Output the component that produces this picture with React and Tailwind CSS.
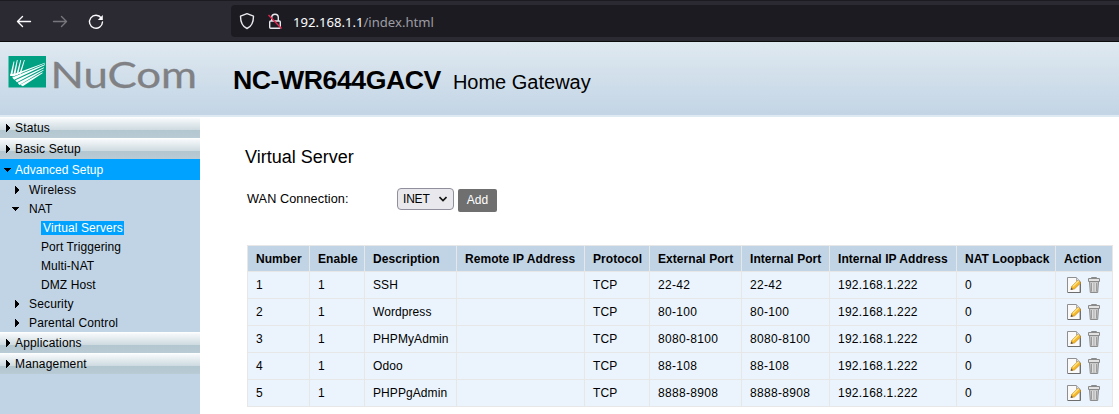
const cols = [
  ['Number', 'w-[61px]'],
  ['Enable', 'w-[54px]'],
  ['Description', 'w-[91px]'],
  ['Remote IP Address', 'w-[127px]'],
  ['Protocol', 'w-[64px]'],
  ['External Port', 'w-[91px]'],
  ['Internal Port', 'w-[87px]'],
  ['Internal IP Address', 'w-[126px]'],
  ['NAT Loopback', 'w-[98px]'],
  ['Action', 'w-[56px]'],
];

const rows = [
  ['SSH', '22-42'],
  ['Wordpress', '80-100'],
  ['PHPMyAdmin', '8080-8100'],
  ['Odoo', '88-108'],
  ['PHPPgAdmin', '8888-8908'],
];

function Arrow({ open }) {
  return (
    <svg width="8" height="8" viewBox="0 0 8 8" className="block shrink-0" shapeRendering="crispEdges">
      <path d={open ? 'M0 2h7.500L3.750 6z' : 'M2 0v8l4.200-4z'} fill="#000" />
    </svg>
  );
}

function Section({ label, open }) {
  return (
    <div
      className={
        open
          ? 'flex h-[21px] items-center gap-[3px] bg-[#00a2ff] pl-1 text-white'
          : 'flex h-[21px] items-center gap-[3px] bg-[linear-gradient(to_bottom,#ffffff_0,#f4f7f9_10%,#cddae0_62%,#b3c7d1_63%,#b9cbd5_100%)] pl-1 text-black'
      }
    >
      <Arrow open={open} />
      <span className={open ? '' : 'tracking-[0.17px]'}>{label}</span>
    </div>
  );
}

function Group({ label, open }) {
  return (
    <div className={open ? 'flex h-[19px] items-center gap-[9px] pl-3' : 'flex h-[19px] items-center gap-2 pl-[13px]'}>
      <Arrow open={open} />
      <span className="tracking-[0.15px]">{label}</span>
    </div>
  );
}

function Leaf({ label, active }) {
  return (
    <div className="flex h-[19px] items-center pl-[41px]">
      <span
        className={
          active
            ? 'h-[14px] bg-[#00a2ff] pl-[2px] pr-[1px] leading-[14px] tracking-[0.1px] text-white'
            : 'tracking-[0.09px]'
        }
      >
        {label}
      </span>
    </div>
  );
}

function EditIcon() {
  return (
    <svg width="16" height="16" viewBox="0 0 16 16">
      <path d="M1.500 .5h9l3.500 3.500v11.500h-12.500z" fill="#fafafa" stroke="#8f8f8f" />
      <path d="M10.500 .5V4H14" fill="#ddd" stroke="#aaa" />
      <path d="M14.500 5v10.500H2" fill="none" stroke="#6d6d6d" />
      <path d="M5 12.500l.8-3.200 6.200-6 2.700 2.600-6.200 6z" fill="#f5b92b" stroke="#c98a18" strokeWidth=".7" />
      <path d="M6.800 9.500l6-5.800" stroke="#ffe58a" strokeWidth="1.200" />
      <path d="M4.600 12.900l.7-2.400 1.800 1.700z" fill="#555" />
    </svg>
  );
}

function TrashIcon() {
  return (
    <svg width="14" height="16" viewBox="0 0 14 16">
      <path d="M2.500 4.500h9l-.8 11H3.300z" fill="#c9c9c9" stroke="#8c8c8c" />
      <path d="M4.700 6v8.500M7 6v8.500M9.300 6v8.500" stroke="#8a8a8a" strokeWidth=".9" />
      <path d="M5.800 6v8.500M8.100 6v8.500" stroke="#f0f0f0" strokeWidth=".9" />
      <path d="M1.500 1.500h11v3h-11z" fill="#e2e2e2" stroke="#8a8a8a" />
      <path d="M4.500 1.500V.5h5v1" fill="none" stroke="#8a8a8a" />
    </svg>
  );
}

export default function App() {
  return (
    <div className="flex h-[414px] w-[1119px] flex-col overflow-hidden bg-white font-['Liberation_Sans',Arial,sans-serif] text-[12px] text-black">
      <div className="flex h-[42px] shrink-0 items-center border-b border-t border-b-[#0c0c0d] border-t-[#1c1b22] bg-[#2b2a33]">
        <svg width="231" height="40" viewBox="0 1 231 40" fill="none" strokeWidth="1.400" strokeLinecap="round" strokeLinejoin="round">
          <path d="M30.500 21.500H17.500M22.500 16.500l-5 5 5 5" stroke="#fbfbfe" />
          <path d="M53.500 21.500h13M61.500 16.500l5 5-5 5" stroke="#77767c" />
          <path d="M101.300 18a6.500 6.500 0 1 0 1.200 4" stroke="#fbfbfe" />
          <path d="M102.800 15v5h-5z" fill="#fbfbfe" />
        </svg>
        <div className="flex h-[32px] flex-1 items-center rounded-l-[4px] bg-[#1c1b22]">
          <svg width="63" height="32" viewBox="231 5 63 32" fill="none" stroke="#e8e8ed" strokeWidth="1.400" strokeLinejoin="round">
            <path d="M247 13.700l6.500 2.500c0 6-2.500 10.500-6.500 12.300-4-1.800-6.500-6.300-6.500-12.300z" />
            <rect x="269.700" y="21" width="10.600" height="7.300" rx="1" />
            <path d="M271.700 21v-3.500a3.300 3.300 0 0 1 6.600 0V21" />
            <path d="M268.500 15l13 13.500" stroke="#e22850" />
          </svg>
          <span className="-ml-px whitespace-nowrap pt-[3px] font-['Noto_Sans',sans-serif] text-[13.100px] text-[#fbfbfe]">
            192.168.1.1<span className="text-[#9d9ca2]">/index.html</span>
          </span>
        </div>
      </div>

      <header className="flex h-[75px] shrink-0 border-b-2 border-[#dfe9f1] bg-[linear-gradient(to_bottom,#dfe9f0,#c2d4e5)] bg-origin-border">
        <svg width="233" height="73" viewBox="0 42 233 73">
          <rect x="8.500" y="56" width="37.500" height="31.500" fill="#00a083" />
          <g fill="#fff">
            <path d="M10 76L13.600 61.500l.8.100L12.200 76zM13 76L16.900 60l.8.100L15.200 75.500zM16 75.500L20.400 60l.8.100L18.200 74.500zM19 74.500L24 60l.8.100L21 73.500z" />
            <path d="M9.800 74.500L13 76.500 45 63.300V62.700L16 73.200zM12.200 77.500l2 2.200L45 65v-.8zM15.200 80.200l1.700 2.100L44 68v-.8zM17.600 82.800l1.800 2.100L43.500 70.500v-.8zM20.300 84.800l2.500 1.500L42.500 73.200v-.9z" />
          </g>
          <text x="50.500" y="87.500" textLength="146.500" lengthAdjust="spacingAndGlyphs" fill="#808184" stroke="#808184" strokeWidth=".3" className="font-['Lato',sans-serif] text-[36px]">NuCom</text>
        </svg>
        <div className="flex items-baseline gap-[12px] whitespace-nowrap pt-[22px]">
          <h1 className="text-[26.670px] font-bold leading-[32px] tracking-[-0.450px]">NC-WR644GACV</h1>
          <span className="text-[20px] leading-[32px]">Home Gateway</span>
        </div>
      </header>

      <div className="flex flex-1">
        <nav className="w-[200px] shrink-0 bg-[#c1d4e5]">
          <Section label="Status" />
          <Section label="Basic Setup" />
          <Section label="Advanced Setup" open />
          <Group label="Wireless" />
          <Group label="NAT" open />
          <Leaf label="Virtual Servers" active />
          <Leaf label="Port Triggering" />
          <Leaf label="Multi-NAT" />
          <Leaf label="DMZ Host" />
          <Group label="Security" />
          <Group label="Parental Control" />
          <Section label="Applications" />
          <Section label="Management" />
        </nav>

        <main className="pl-[47px] pt-[30px]">
          <h2 className="-ml-[2px] text-[18px] leading-[20px]">Virtual Server</h2>
          <div className="mt-[21px] flex h-[23px] items-start">
            <span className="w-[150px] text-[12.700px] leading-[22px] tracking-[0.080px]">WAN Connection:</span>
            <button className="flex h-[22px] w-[57px] items-center justify-between rounded-[4px] border border-[#8f8f9d] bg-[#e9e9ed] pl-[5px] pr-[6px]">
              <span className="tracking-[-0.200px]">INET</span>
              <svg width="8" height="6" viewBox="0 0 8 6" fill="none" stroke="#111" strokeWidth="1.600">
                <path d="M.5 1L4 4.500 7.500 1" />
              </svg>
            </button>
            <button className="ml-1 mt-px h-[23px] w-[39px] rounded-[2px] bg-[#6f6f6f] pb-[2px] text-white">Add</button>
          </div>
          <table className="mt-[34px] w-[866px] table-fixed border-separate border-spacing-px bg-[#e7e7e7] text-left">
            <thead>
              <tr className="h-[25px] bg-[#c1d4e5]">
                {cols.map(([name, width]) => (
                  <th key={name} className={`${width} whitespace-nowrap p-0 pl-2 font-bold tracking-[0.050px]`}>{name}</th>
                ))}
              </tr>
            </thead>
            <tbody>
              {rows.map(([name, ports], i) => (
                <tr key={name} className="h-[26px] bg-[#ebf4fc]">
                  {[i + 1, 1, name, '', 'TCP', ports, ports, '192.168.1.222', 0].map((v, j) => (
                    <td
                      key={j}
                      className={
                        j === 5 || j === 6
                          ? 'whitespace-nowrap p-0 pl-2 leading-[14px] tracking-[0.330px]'
                          : j === 7
                            ? 'whitespace-nowrap p-0 pl-2 leading-[14px] tracking-[0.230px]'
                            : 'whitespace-nowrap p-0 pl-2 leading-[14px] tracking-[0.080px]'
                      }
                    >
                      {v}
                    </td>
                  ))}
                  <td className="p-0 pl-[10px]">
                    <div className="flex gap-[5px]">
                      <EditIcon />
                      <TrashIcon />
                    </div>
                  </td>
                </tr>
              ))}
            </tbody>
          </table>
        </main>
      </div>
    </div>
  );
}
